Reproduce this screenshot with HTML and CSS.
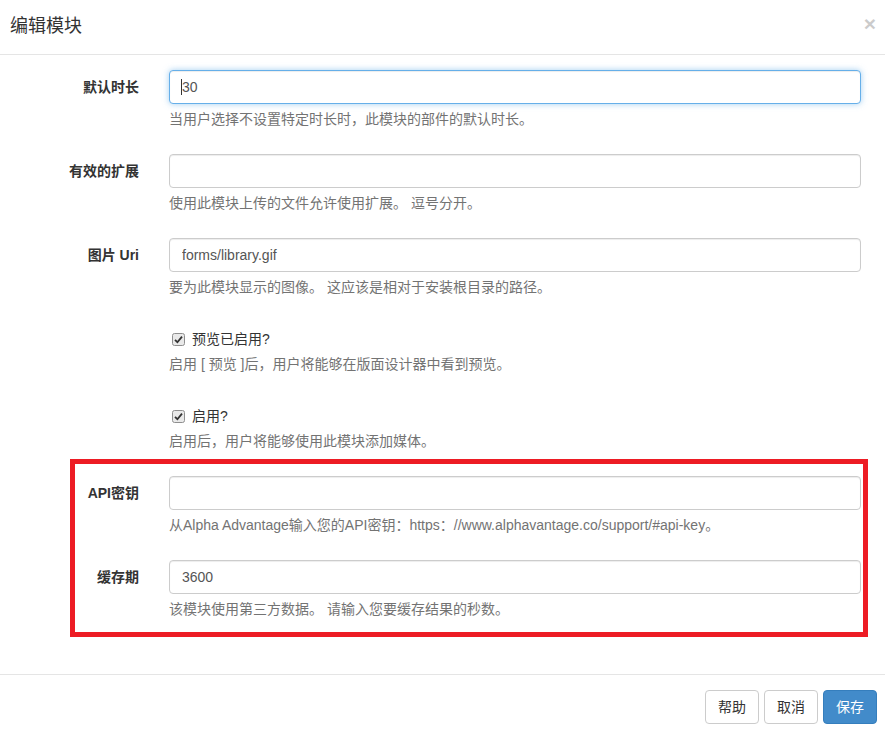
FILE: index.html
```html
<!DOCTYPE html>
<html lang="zh-CN">
<head>
<meta charset="utf-8">
<title>编辑模块</title>
<link rel="stylesheet" href="styles.css">
</head>
<body>
<div class="modal">
  <div class="modal-header">
    <h4 class="modal-title">编辑模块</h4>
    <span class="close">×</span>
  </div>
  <div class="modal-body">
    <div class="form-group">
      <label class="control-label">默认时长</label>
      <div class="control">
        <div class="input-wrap">
          <input class="form-control focused" type="text" value="30">
          <span class="caret-line"></span>
        </div>
        <p class="help-block">当用户选择不设置特定时长时，此模块的部件的默认时长。</p>
      </div>
    </div>
    <div class="form-group">
      <label class="control-label">有效的扩展</label>
      <div class="control">
        <input class="form-control" type="text" value="">
        <p class="help-block">使用此模块上传的文件允许使用扩展。 逗号分开。</p>
      </div>
    </div>
    <div class="form-group">
      <label class="control-label">图片 Uri</label>
      <div class="control">
        <input class="form-control" type="text" value="forms/library.gif">
        <p class="help-block">要为此模块显示的图像。 这应该是相对于安装根目录的路径。</p>
      </div>
    </div>
    <div class="form-group">
      <span class="control-label"></span>
      <div class="control checkbox">
        <label class="check-label">
          <svg class="check-box" width="13" height="13" viewBox="0 0 13 13"><rect x="0.5" y="0.5" width="12" height="12" rx="2" fill="#e9e9e9" stroke="#8f8f8f"/><path d="M3 6.8 L5.4 9.2 L10 3.6" fill="none" stroke="#333" stroke-width="1.8"/></svg>
          预览已启用?
        </label>
        <p class="help-block">启用 [ 预览 ]后，用户将能够在版面设计器中看到预览。</p>
      </div>
    </div>
    <div class="form-group">
      <span class="control-label"></span>
      <div class="control checkbox">
        <label class="check-label">
          <svg class="check-box" width="13" height="13" viewBox="0 0 13 13"><rect x="0.5" y="0.5" width="12" height="12" rx="2" fill="#e9e9e9" stroke="#8f8f8f"/><path d="M3 6.8 L5.4 9.2 L10 3.6" fill="none" stroke="#333" stroke-width="1.8"/></svg>
          启用?
        </label>
        <p class="help-block">启用后，用户将能够使用此模块添加媒体。</p>
      </div>
    </div>
    <div class="highlight">
      <div class="form-group">
        <label class="control-label">API密钥</label>
        <div class="control">
          <input class="form-control" type="text" value="">
          <p class="help-block">从Alpha Advantage输入您的API密钥：https：//www.alphavantage.co/support/#api-key。</p>
        </div>
      </div>
      <div class="form-group">
        <label class="control-label">缓存期</label>
        <div class="control">
          <input class="form-control" type="text" value="3600">
          <p class="help-block">该模块使用第三方数据。 请输入您要缓存结果的秒数。</p>
        </div>
      </div>
    </div>
  </div>
  <div class="modal-footer">
    <button class="btn">帮助</button>
    <button class="btn">取消</button>
    <button class="btn btn-primary">保存</button>
  </div>
</div>
</body>
</html>
```

FILE: styles.css
```css
* { box-sizing: border-box; }
html, body {
  margin: 0;
  padding: 0;
  background: #fff;
}
body {
  font-family: "Liberation Sans", "Noto Sans CJK SC", sans-serif;
  font-size: 14px;
  line-height: 20px;
  color: #333;
}
.modal {
  width: 885px;
}
.modal-header {
  display: flex;
  justify-content: space-between;
  align-items: flex-start;
  padding: 14px 9px 15px 10px;
  border-bottom: 1px solid #e5e5e5;
}
.modal-title {
  margin: 0;
  font-size: 18px;
  font-weight: normal;
  line-height: 25px;
  color: #333;
}
.close {
  font-size: 21px;
  font-weight: bold;
  line-height: 20px;
  color: #000;
  opacity: 0.2;
  margin-top: 0;
}
.modal-body {
  padding: 15px 9px 30px 0;
}
.form-group {
  display: flex;
  margin-bottom: 15px;
}
.control-label {
  width: 154px;
  flex: none;
  padding: 7px 15px 0 0;
  text-align: right;
  font-weight: bold;
  color: #333;
}
.control {
  flex: 1;
  padding: 0 15px;
  min-width: 0;
}
.input-wrap {
  position: relative;
}
.form-control {
  display: block;
  width: 100%;
  height: 34px;
  padding: 6px 12px;
  font-family: inherit;
  font-size: 14px;
  line-height: 20px;
  color: #555;
  background: #fff;
  border: 1px solid #ccc;
  border-radius: 4px;
  box-shadow: inset 0 1px 1px rgba(0,0,0,0.075);
  outline: none;
}
.form-control.focused {
  border-color: #66afe9;
  box-shadow: inset 0 1px 1px rgba(0,0,0,0.075), 0 0 6px rgba(102,175,233,0.6);
}
.caret-line {
  position: absolute;
  left: 12px;
  top: 9px;
  width: 1px;
  height: 16px;
  background: #333;
}
.help-block {
  margin: 5px 0 10px;
  color: #737373;
  white-space: nowrap;
}
.checkbox {
  padding-top: 7px;
}
.check-label {
  display: flex;
  align-items: center;
  gap: 7px;
  font-weight: normal;
  color: #333;
  height: 20px;
  padding-left: 3px;
}
.check-box {
  flex: none;
}
.highlight {
  position: relative;
}
.highlight::after {
  content: "";
  position: absolute;
  top: -17px;
  left: 70px;
  right: 8px;
  bottom: -8px;
  border: 5px solid #ed1c24;
  pointer-events: none;
}
.modal-footer {
  display: flex;
  justify-content: flex-end;
  gap: 5px;
  padding: 15px 8px 15px 15px;
  border-top: 1px solid #e5e5e5;
}
.btn {
  height: 34px;
  padding: 6px 12px;
  font-family: inherit;
  font-size: 14px;
  line-height: 20px;
  color: #333;
  background: #fff;
  border: 1px solid #ccc;
  border-radius: 4px;
}
.btn-primary {
  color: #fff;
  background: #428bca;
  border-color: #357ebd;
}
```
